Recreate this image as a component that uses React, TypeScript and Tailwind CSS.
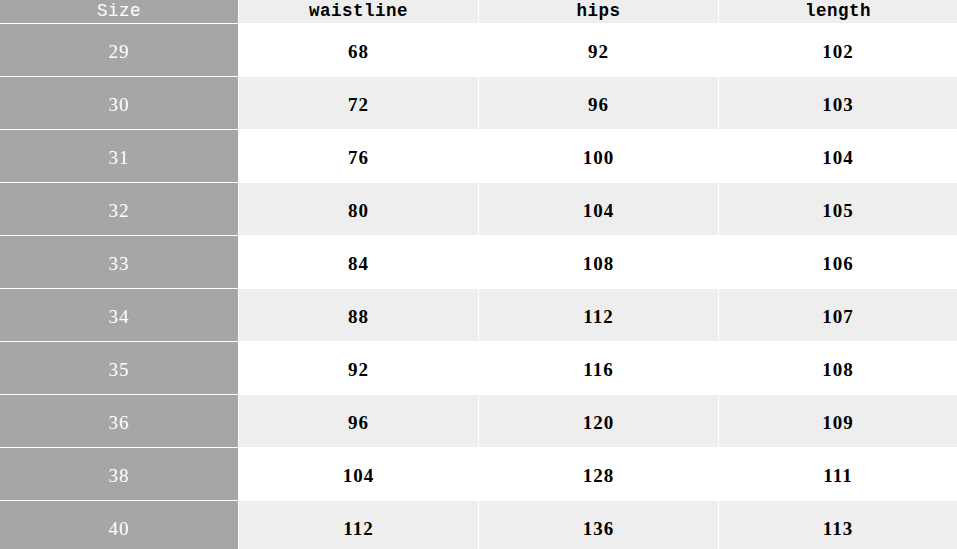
import React from "react";

const rows: [string, string, string, string][] = [
  ["29", "68", "92", "102"],
  ["30", "72", "96", "103"],
  ["31", "76", "100", "104"],
  ["32", "80", "104", "105"],
  ["33", "84", "108", "106"],
  ["34", "88", "112", "107"],
  ["35", "92", "116", "108"],
  ["36", "96", "120", "109"],
  ["38", "104", "128", "111"],
  ["40", "112", "136", "113"],
];

const headCell =
  "flex items-center justify-center text-[17.5px] tracking-[0.5px] leading-none font-['Liberation_Mono',monospace]";
const bodyCell =
  "flex items-center justify-center text-[19px] tracking-[1px] leading-none pt-[3px] font-['Liberation_Serif',serif]";

export default function App() {
  return (
    <div className="w-[957px] h-[549px] overflow-hidden bg-white">
      <div className="grid grid-cols-[238px_239px_239px_238px] grid-rows-[23px_repeat(10,52px)] gap-px bg-white">
        <div className={`${headCell} bg-[#a6a6a6] text-white`}>Size</div>
        {["waistline", "hips", "length"].map((h) => (
          <div key={h} className={`${headCell} bg-[#edeeed] text-black font-bold`}>
            {h}
          </div>
        ))}
        {rows.map((r, i) => (
          <React.Fragment key={r[0]}>
            <div className={`${bodyCell} bg-[#a6a6a6] text-white`}>{r[0]}</div>
            {r.slice(1).map((v, j) => (
              <div
                key={j}
                className={`${bodyCell} ${i % 2 === 0 ? "bg-white" : "bg-[#edeeed]"} text-black font-bold`}
              >
                {v}
              </div>
            ))}
          </React.Fragment>
        ))}
      </div>
    </div>
  );
}
